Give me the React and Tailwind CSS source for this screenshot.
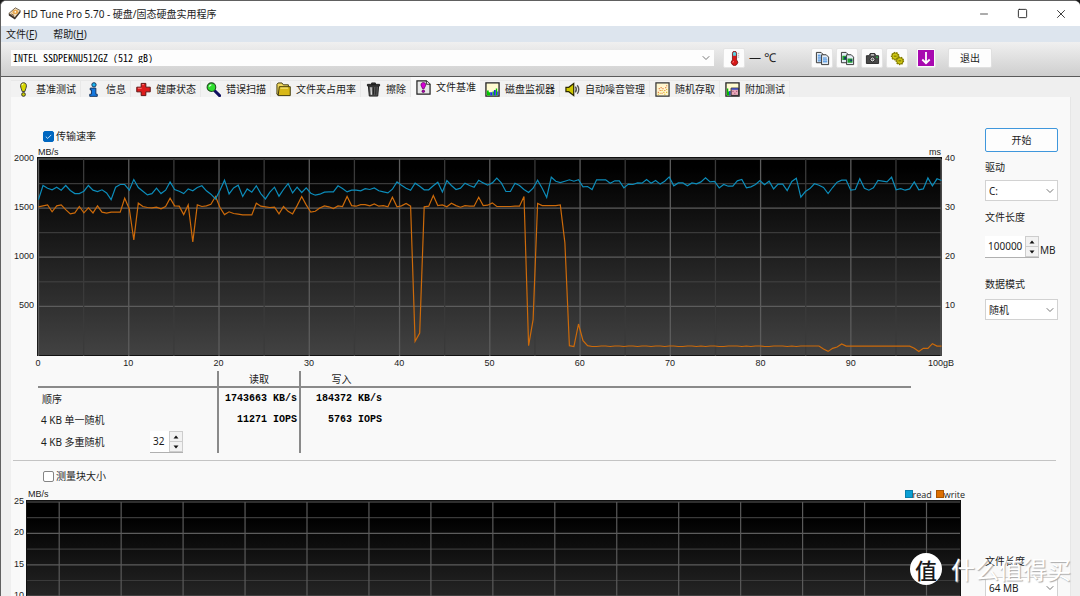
import React from 'react'
import clsx from 'clsx'
import { ChevronDown, Minus, Square, X } from 'lucide-react'

// transfer rate in MB/s, evenly spaced over the test file
const READ = [
  1582, 1725, 1698, 1681, 1708, 1677, 1725, 1674, 1643, 1643, 1667, 1725, 1677, 1664, 1681, 1650, 1582, 1708, 1735, 1735,
  1677, 1786, 1705, 1667, 1630, 1643, 1698, 1643, 1677, 1762, 1684, 1667, 1643, 1691, 1671, 1705, 1722, 1671, 1637, 1589,
  1677, 1779, 1640, 1701, 1728, 1613, 1691, 1657, 1722, 1643, 1589, 1657, 1708, 1616, 1684, 1745, 1650, 1708, 1654, 1701,
  1647, 1626, 1637, 1657, 1660, 1660, 1722, 1694, 1660, 1677, 1677, 1671, 1694, 1684, 1701, 1671, 1660, 1650, 1688, 1762,
  1728, 1698, 1677, 1749, 1718, 1681, 1681, 1722, 1759, 1660, 1776, 1725, 1684, 1698, 1749, 1725, 1708, 1779, 1752, 1728,
  1752, 1800, 1752, 1664, 1664, 1749, 1725, 1684, 1654, 1698, 1779, 1698, 1603, 1810, 1769, 1755, 1769, 1783, 1769, 1783,
  1711, 1715, 1684, 1783, 1783, 1783, 1749, 1773, 1773, 1701, 1739, 1735, 1752, 1749, 1786, 1749, 1776, 1739, 1769, 1813,
  1722, 1752, 1752, 1722, 1752, 1742, 1762, 1803, 1762, 1766, 1701, 1735, 1718, 1718, 1773, 1786, 1701, 1711, 1735, 1776,
  1732, 1769, 1691, 1739, 1739, 1674, 1766, 1800, 1606, 1664, 1694, 1742, 1728, 1705, 1643, 1705, 1759, 1779, 1779, 1677,
  1684, 1793, 1698, 1677, 1701, 1776, 1769, 1762, 1810, 1681, 1694, 1677, 1691, 1762, 1681, 1691, 1803, 1722, 1793, 1776,
]

const WRITE = [
  1508, 1518, 1528, 1457, 1518, 1528, 1480, 1436, 1446, 1511, 1446, 1497, 1446, 1518, 1453, 1443, 1453, 1453, 1453, 1596,
  1487, 1171, 1545, 1511, 1501, 1497, 1504, 1487, 1511, 1596, 1518, 1514, 1429, 1528, 1151, 1528, 1511, 1518, 1535, 1613,
  1501, 1429, 1457, 1440, 1433, 1426, 1426, 1426, 1545, 1514, 1508, 1501, 1504, 1436, 1511, 1463, 1436, 1521, 1613, 1528,
  1453, 1463, 1497, 1518, 1508, 1491, 1518, 1511, 1613, 1521, 1514, 1531, 1531, 1518, 1538, 1514, 1521, 1508, 1606, 1508,
  1518, 1542, 1514, 139, 224, 1508, 1514, 1623, 1521, 1528, 1508, 1545, 1521, 1504, 1521, 1514, 1514, 1606, 1521, 1525,
  1548, 1511, 1511, 1511, 1511, 1514, 1514, 1613, 95, 360, 1542, 1521, 1521, 1521, 1521, 1528, 1141, 95, 85, 316,
  146, 95, 87, 87, 92, 92, 87, 92, 92, 87, 92, 92, 87, 92, 92, 87, 92, 92, 87, 92,
  92, 87, 87, 92, 92, 87, 92, 87, 92, 92, 87, 87, 92, 92, 92, 87, 92, 87, 92, 92,
  87, 87, 92, 92, 92, 87, 92, 87, 92, 92, 92, 92, 92, 61, 37, 68, 81, 112, 91, 91,
  91, 91, 91, 91, 91, 91, 91, 91, 91, 91, 91, 91, 91, 68, 37, 68, 68, 115, 91, 91,
]

const TABS = [
  { label: '基准测试', icon: BenchmarkIcon },
  { label: '信息', icon: InfoIcon },
  { label: '健康状态', icon: HealthIcon },
  { label: '错误扫描', icon: ScanIcon },
  { label: '文件夹占用率', icon: FolderIcon },
  { label: '擦除', icon: EraseIcon },
  { label: '文件基准', icon: FileBenchmarkIcon, active: true },
  { label: '磁盘监视器', icon: MonitorIcon },
  { label: '自动噪音管理', icon: NoiseIcon },
  { label: '随机存取', icon: RandomIcon },
  { label: '附加测试', icon: ExtraIcon },
]

function Icon({ children, className }) {
  return (
    <svg viewBox="0 0 16 16" className={clsx('size-[15px] shrink-0', className)} aria-hidden="true">
      {children}
    </svg>
  )
}

function BenchmarkIcon() {
  return (
    <Icon>
      <path d="M8 .8c2 0 3.1 1.3 3.1 3.2 0 2.2-1.1 3.7-1.7 6.200H6.600C6 7.700 4.900 6.200 4.900 4 4.900 2.100 6 .8 8 .8z" fill="#d8d800" stroke="#333" />
      <path d="M6.500 3.500c0-.9.6-1.400 1.300-1.400" stroke="#fff" fill="none" />
      <circle cx="8" cy="13.3" r="2" fill="#c8c800" stroke="#333" />
    </Icon>
  )
}

function InfoIcon() {
  return (
    <Icon>
      <circle cx="8.5" cy="3" r="2.3" fill="#1ab4f0" stroke="#12305a" />
      <path d="M4.500 6.500h6v6.500h1.500v2.300H4V13h1.800V8.500H4.500z" fill="#1478e0" stroke="#12305a" />
    </Icon>
  )
}

function HealthIcon() {
  return (
    <Icon>
      <path d="M5.500 1.500h5v4h4.700v5h-4.700v4h-5v-4H.8v-5h4.700z" fill="#dd1c1c" stroke="#5a1010" />
      <path d="M6.500 2.800h2M2 6.700h4" stroke="#ff8080" />
    </Icon>
  )
}

function ScanIcon() {
  return (
    <Icon>
      <path d="M9 9l5.500 5.500" stroke="#101060" strokeWidth="3.2" strokeLinecap="round" />
      <circle cx="5.8" cy="5.5" r="4.6" fill="#2ee02e" stroke="#245024" strokeWidth="1.2" />
      <path d="M3.500 5c.3-1.200 1-1.900 2.200-2" stroke="#dfffdf" strokeWidth="1.3" fill="none" />
    </Icon>
  )
}

function FolderIcon() {
  return (
    <Icon>
      <path d="M1 13V2.500L2.300 1h4l1.500 2h5.400v2" fill="#f0d860" stroke="#3b3306" />
      <path d="M3.500 5h11.700v9.500H2.300z" fill="#d8b818" stroke="#3b3306" />
      <path d="M1 12.500l1.300 2" stroke="#3b3306" />
      <path d="M4.700 6.500h8" stroke="#fff29a" />
    </Icon>
  )
}

function EraseIcon() {
  return (
    <Icon>
      <path d="M2.500 4h11l-1 11h-9z" fill="#555" stroke="#1c1c1c" />
      <path d="M1.500 2.500h13v1.700h-13zM6 1h4v1.500H6z" fill="#444" stroke="#1c1c1c" />
      <path d="M5.300 5.500l.4 8" stroke="#eee" strokeWidth="1.3" />
      <path d="M8 5.500v8M10.700 5.500l-.4 8" stroke="#222" />
    </Icon>
  )
}

function FileBenchmarkIcon() {
  return (
    <Icon>
      <path d="M1 1h10l4 3.500V15H1z" fill="#e8e8e8" stroke="#222" strokeWidth="1.3" />
      <path d="M11 1v3.500h4" fill="#fff" stroke="#222" />
      <path d="M7.800 2.700c1.700 0 2.500 1 2.500 2.500S9.200 7.500 8.700 9.300H6.900c-.5-1.800-1.600-2.600-1.600-4.100s.8-2.500 2.500-2.500z" fill="#d400d4" stroke="#500050" strokeWidth=".7" />
      <circle cx="7.8" cy="12" r="1.4" fill="#b000b0" stroke="#500050" strokeWidth=".7" />
    </Icon>
  )
}

function MonitorIcon() {
  return (
    <Icon>
      <path d="M1 1h14v14H1z" fill="#fffbd0" stroke="#222" strokeWidth="1.4" />
      <path d="M2 14.300V9h2v2h1.500v3.300zM8 14.300V10h1.500v4.300zM11.500 14.300V7H13v7.300z" fill="#00c800" />
      <path d="M5.500 14.300V11H8v3.300zM9.500 14.300V8.500h2v5.800zM13 14.300V10h1.200v4.300z" fill="#2030e0" />
    </Icon>
  )
}

function NoiseIcon() {
  return (
    <Icon>
      <path d="M1 5.700h3L9.300 1.500v13L4 10.300H1z" fill="#d0c800" stroke="#2d2a00" strokeWidth="1.3" />
      <path d="M11 5c1.300 1.700 1.300 4.300 0 6M13 3.500c2.200 2.500 2.200 6.500 0 9" fill="none" stroke="#555" strokeWidth="1.5" />
    </Icon>
  )
}

function RandomIcon() {
  return (
    <Icon>
      <path d="M1 1h14v14H1z" fill="#fff6cf" stroke="#333" strokeWidth="1.3" />
      <path d="M3 11h1M5 9h1M7 12h1M8 7h1M10 9h1M12 4h1M11 6h1M4 7h1M6 6h1" stroke="#e06020" strokeWidth="1.2" />
      <path d="M3 13h1M5 12h1M9 11h1M12 11h1M10 13h1M7 9h1M12 8h1" stroke="#d8a800" strokeWidth="1.2" />
    </Icon>
  )
}

function ExtraIcon() {
  return (
    <Icon>
      <path d="M1 1h14v14H1z" fill="#fffbd0" stroke="#222" strokeWidth="1.4" />
      <path d="M2 14.300V7h1.500v3H5v4.300z" fill="#00b800" />
      <path d="M4.500 14V9.500H6V14z" fill="#2030e0" />
      <path d="M6.500 6.500h8v7.800h-8z" fill="#e8a8b8" stroke="#222" />
      <path d="M7 7.500h7" stroke="#3048c0" strokeWidth="1.6" />
      <path d="M8 10h1M10 12h1M12 10h1" stroke="#903060" />
    </Icon>
  )
}

function DiskLogo() {
  return (
    <svg viewBox="0 0 16 16" className="size-[13px] shrink-0" aria-hidden="true">
      <path d="M1 8L9 1l6.300 3.500L8.500 13z" fill="#f0dcb8" stroke="#4a3a28" strokeWidth=".9" />
      <path d="M1 8l7.500 5v2.300L1 10.500zM8.500 13l6.800-8.500v2.300l-6.800 8.500z" fill="#3b3028" />
      <ellipse cx="9" cy="6" rx="3.5" ry="2.7" fill="#e8a850" />
      <circle cx="9" cy="6" r="1" fill="#fff" />
      <path d="M4 8.500l3.500 2" stroke="#7a5030" strokeWidth="1.2" />
    </svg>
  )
}

function ThermometerIcon() {
  return (
    <Icon>
      <path d="M5.800 9.500V2.500a2.200 2.200 0 014.400 0v7a3.400 3.400 0 11-4.400 0z" fill="#d81818" stroke="#6a1010" strokeWidth=".8" />
      <path d="M6.500 2.500a1.500 1.500 0 013 0V5h-3z" fill="#50d8e8" />
      <path d="M11.500 2.500H13M11.500 4.500H13M11.500 6.500H13" stroke="#888" strokeWidth=".7" />
      <path d="M6.300 12.300c0-.6.3-1 .8-1.200" stroke="#ffb0b0" fill="none" />
    </Icon>
  )
}

function CopyIcon({ green }) {
  return (
    <Icon>
      <path d="M1.500 1.500h5l2 2v9h-7z" fill="#e4ecf4" stroke="#333" />
      <path d="M7 4h5l2.500 2.500v8H7z" fill="#e4ecf4" stroke="#333" />
      {green ? (
        <>
          <path d="M2.500 5h4v4.500h-4zM8 8h5.300v4.500H8z" fill="#20a030" />
          <path d="M4.500 6.500h2V9h-2zM11 9h2v2h-2z" fill="#183070" />
        </>
      ) : (
        <path d="M3 4.500h3M3 6.500h3.500M3 8.500h3.500M3 10.500h3.500M8.500 7.500h4M8.500 9.500h4.500M8.500 11.500h4.500" stroke="#2a80e0" />
      )}
    </Icon>
  )
}

function CameraIcon() {
  return (
    <Icon>
      <path d="M1.500 5h3l1-2.300h5l1 2.300h3v8.300h-13z" fill="#484848" stroke="#2a2a2a" strokeLinejoin="round" />
      <path d="M6.300 3.500h3.400v1.300H6.300z" fill="#ddd" />
      <circle cx="8" cy="9" r="2.6" fill="#e8e8e8" stroke="#222" />
      <circle cx="8" cy="9" r="1.2" fill="#555" />
      <path d="M12 6.500h1.700" stroke="#20d040" strokeWidth="1.3" />
    </Icon>
  )
}

function OptionsIcon() {
  return (
    <Icon>
      <circle cx="5.500" cy="5.500" r="3.6" fill="#c8c010" stroke="#8a8200" strokeWidth="2" strokeDasharray="1.5 1" />
      <circle cx="5.500" cy="5.500" r="3.4" fill="#d0c810" stroke="#6a6400" strokeWidth=".7" />
      <circle cx="10.500" cy="10.500" r="3.6" fill="#c8c010" stroke="#8a8200" strokeWidth="2" strokeDasharray="1.5 1" />
      <circle cx="10.500" cy="10.500" r="3.4" fill="#d0c810" stroke="#6a6400" strokeWidth=".7" />
      <path d="M4 5.500h3M9 10.500h3" stroke="#6a6400" />
    </Icon>
  )
}

function ToolButton({ label, children }) {
  return (
    <button
      aria-label={label}
      className="flex h-5 w-[22px] items-center justify-center rounded-xs border border-[#e4e4e4] bg-[#fcfcfc]"
    >
      {children}
    </button>
  )
}

function CheckBox({ id, label, defaultChecked }) {
  return (
    <div className="flex h-4 items-center gap-0.5">
      <span className="grid place-items-center">
        <input
          id={id}
          type="checkbox"
          defaultChecked={defaultChecked}
          className="peer size-[11px] appearance-none rounded-xs border border-[#858585] bg-white [grid-area:1/1] checked:border-[#0067c0] checked:bg-[#0067c0]"
        />
        <svg viewBox="0 0 10 10" className="pointer-events-none hidden size-[9px] [grid-area:1/1] peer-checked:block">
          <path d="M2 5.200l2.100 2L8 3.200" fill="none" stroke="#d6ecff" />
        </svg>
      </span>
      <label htmlFor={id}>{label}</label>
    </div>
  )
}

function SelectBox({ id, value, className }) {
  return (
    <div className={clsx('grid items-center', className)}>
      <select
        id={id}
        defaultValue={value}
        className="h-full w-full appearance-none border border-[#d2d2d2] bg-white px-[3px] [grid-area:1/1]"
      >
        <option>{value}</option>
      </select>
      <ChevronDown className="pointer-events-none mr-0.5 size-3 justify-self-end text-[#777] [grid-area:1/1]" />
    </div>
  )
}

function Spinner({ id, label, value, className }) {
  return (
    <div className="flex h-[22px] border-b border-[#b0b0b0]">
      <input id={id} aria-label={label} defaultValue={value} className={clsx('h-full bg-white pb-0.5 pl-[3px]', className)} />
      <div className="flex w-[14px] flex-col gap-px bg-[#cdcdcd] p-px">
        <button aria-label="增加" className="flex flex-1 items-center justify-center bg-[#f2f2f2]">
          <svg viewBox="0 0 6 4" className="h-1 w-1.5"><path d="M.5 3.500L3 .5l2.500 3z" fill="#111" /></svg>
        </button>
        <button aria-label="减少" className="flex flex-1 items-center justify-center bg-[#f2f2f2]">
          <svg viewBox="0 0 6 4" className="h-1 w-1.5"><path d="M.5.5l2.500 3 2.500-3z" fill="#111" /></svg>
        </button>
      </div>
    </div>
  )
}

function AxisY({ ticks, className }) {
  return (
    <div className={clsx('flex flex-col justify-between py-px', className)}>
      {ticks.map((t, i) => (
        <span key={i} className="flex h-0 items-center">{t}</span>
      ))}
    </div>
  )
}

const toPoints = (series) =>
  series.map((v, i) => `${(1.5 + (i * 903) / (series.length - 1)).toFixed(1)},${(198 - (v * 196.5) / 2000).toFixed(1)}`).join(' ')

function TransferChart() {
  const columns = Array.from({ length: 21 }, (_, i) => i)
  const rows = Array.from({ length: 8 }, (_, i) => i)
  return (
    <svg viewBox="0 0 905 199" preserveAspectRatio="none" className="block h-[199px] w-full">
      <defs>
        <linearGradient id="plot" x1="0" y1="0" x2="0" y2="1">
          <stop offset="0.05" stopColor="#000" />
          <stop offset="1" stopColor="#424242" />
        </linearGradient>
      </defs>
      <rect width="905" height="199" fill="#111" />
      <rect x="1" y="1" width="903" height="197" fill="url(#plot)" />
      {rows.map((i) => (
        <line key={i} x1="1" x2="904" y1={2 + i * 24.55} y2={2 + i * 24.55} stroke={i % 2 ? '#3a3a3a' : '#5c5c5c'} strokeWidth="1.3" />
      ))}
      {columns.map((i) => (
        <line key={i} y1="2" y2="199" x1={1.5 + i * 45.13} x2={1.5 + i * 45.13} stroke={i % 2 ? '#3a3a3a' : '#5c5c5c'} strokeWidth="1.3" />
      ))}
      <polyline points={toPoints(WRITE)} fill="none" stroke="#cc6a0a" strokeWidth="1.2" />
      <polyline points={toPoints(READ)} fill="none" stroke="#0c8cba" strokeWidth="1.2" />
    </svg>
  )
}

function BlockSizeChart() {
  return (
    <svg viewBox="0 0 935 160" preserveAspectRatio="none" className="block h-[160px] w-full">
      <defs>
        <linearGradient id="blocks" x1="0" y1="0" x2="0" y2="1">
          <stop offset="0.1" stopColor="#000" />
          <stop offset="1" stopColor="#424242" />
        </linearGradient>
      </defs>
      <rect width="935" height="160" fill="#111" />
      <rect x="1" y="1" width="933" height="158" fill="url(#blocks)" />
      {Array.from({ length: 10 }, (_, i) => (
        <line key={i} x1="1" x2="934" y1={2 + i * 15.7} y2={2 + i * 15.7} stroke={i % 2 ? '#3a3a3a' : '#5c5c5c'} strokeWidth="1.2" />
      ))}
      {Array.from({ length: 15 }, (_, i) => (
        <line key={i} y1="2" y2="159" x1={33.2 + i * 61.95} x2={33.2 + i * 61.95} stroke="#5a5a5a" strokeWidth="1.2" />
      ))}
    </svg>
  )
}

function TitleBar() {
  return (
    <header className="flex h-[25px] items-center bg-white pl-[7px]">
      <DiskLogo />
      <h1 className="ml-0.5 flex-1">HD Tune Pro 5.70 - 硬盘/固态硬盘实用程序</h1>
      <div className="flex items-center text-[#222]">
        <button aria-label="最小化" className="flex w-[39px] justify-center"><Minus className="size-3" strokeWidth={1.5} /></button>
        <button aria-label="最大化" className="flex w-[39px] justify-center"><Square className="size-[11px]" strokeWidth={2} /></button>
        <button aria-label="关闭" className="flex w-[38px] justify-center"><X className="size-[14px]" strokeWidth={1.5} /></button>
      </div>
    </header>
  )
}

function Toolbar() {
  return (
    <div className="flex h-[35px] items-center border-b border-[#5a5a5a] bg-linear-to-b from-[#f0f0f0] to-[#cecece] pr-[88px] pb-0.5 pl-[10px]">
      <div className="grid h-4 flex-1 items-center">
        <select
          aria-label="硬盘"
          className="h-full w-full appearance-none bg-[#fdfdfd] px-0.5 font-['Noto_Sans_CJK_SC',monospace] text-black [font-feature-settings:'hwid'] [grid-area:1/1]"
        >
          <option>INTEL SSDPEKNU512GZ (512 gB)</option>
        </select>
        <ChevronDown className="pointer-events-none mr-0.5 size-3 justify-self-end text-[#777] [grid-area:1/1]" />
      </div>
      <div className="ml-[9px] flex w-[88px] items-center gap-1">
        <ToolButton label="温度"><ThermometerIcon /></ToolButton>
        <span className="text-xs">— ℃</span>
      </div>
      <div className="flex gap-[3px]">
        <ToolButton label="复制信息"><CopyIcon /></ToolButton>
        <ToolButton label="复制截图"><CopyIcon green /></ToolButton>
        <ToolButton label="保存截图"><CameraIcon /></ToolButton>
        <ToolButton label="选项"><OptionsIcon /></ToolButton>
      </div>
      <button aria-label="最小化到托盘" className="ml-2 flex size-5 items-center justify-center rounded-xs border border-[#e4e4e4] bg-[#fcfcfc]">
        <svg viewBox="0 0 16 16" className="size-4">
          <path d="M0 0h16v16H0z" fill="#a808b0" />
          <path d="M8 2v11M4.300 9.500L8 13.200l3.700-3.700" stroke="#fff" strokeWidth="1.8" fill="none" />
        </svg>
      </button>
      <button className="ml-3 h-5 w-11 rounded-xs border border-[#e0e0e0] bg-[#fdfdfd]">退出</button>
    </div>
  )
}

function Tabs() {
  return (
    <nav className="flex h-5 items-end bg-[#efefef] pl-[10px]">
      {TABS.map(({ label, icon: TabIcon, active }) => (
        <button
          key={label}
          className={clsx(
            'flex items-center gap-[5px] pr-1 pl-[5px]',
            active ? 'h-full bg-[#f9f9f9]' : 'h-[17px] border-t border-r border-[#e8e8e8] bg-[#f2f2f2]'
          )}
        >
          <TabIcon />
          {label}
        </button>
      ))}
    </nav>
  )
}

function Value({ children, className }) {
  return (
    <td className={clsx("text-right font-['Liberation_Mono',monospace] font-bold whitespace-nowrap text-black", className)}>
      {children}
    </td>
  )
}

function Results() {
  return (
    <table className="w-full table-fixed border-collapse text-left">
      <colgroup>
        <col className="w-[180px]" />
        <col className="w-[82px]" />
        <col className="w-[82px]" />
        <col />
      </colgroup>
      <thead>
        <tr className="h-4 border-b-2 border-[#8a8a8a]">
          <th className="border-r-2 border-[#8a8a8a]" />
          <th className="border-r-2 border-[#8a8a8a] text-center font-normal">读取</th>
          <th className="text-center font-normal">写入</th>
          <th />
        </tr>
      </thead>
      <tbody>
        <tr className="h-[22px]">
          <th className="border-r-2 border-[#8a8a8a] pl-1 font-normal">顺序</th>
          <Value className="border-r-2 border-[#8a8a8a] pr-0.5">1743663 KB/s</Value>
          <Value>184372 KB/s</Value>
          <td />
        </tr>
        <tr className="h-[22px]">
          <th className="border-r-2 border-[#8a8a8a] pl-[3px] font-normal">4 KB 单一随机</th>
          <Value className="border-r-2 border-[#8a8a8a] pr-0.5">11271 IOPS</Value>
          <Value>5763 IOPS</Value>
          <td />
        </tr>
        <tr className="h-[22px]">
          <th className="border-r-2 border-[#8a8a8a] pl-[3px] font-normal">
            <div className="flex items-center justify-between pr-[34px]">
              <label htmlFor="queue">4 KB 多重随机</label>
              <Spinner id="queue" value="32" className="w-[19px]" />
            </div>
          </th>
          <td className="border-r-2 border-[#8a8a8a]" />
          <td />
          <td />
        </tr>
      </tbody>
    </table>
  )
}

export default function App() {
  return (
    <div className="h-screen overflow-hidden bg-[#1a1a1a] font-['Noto_Sans','Noto_Sans_CJK_SC',sans-serif] text-[10px] leading-none text-[#1c1c1c]">
      <div className="flex h-full flex-col overflow-hidden rounded-t-md border-t border-l border-[#606060] bg-[#efefef]">
        <TitleBar />
        <nav className="flex h-4 items-center gap-4 bg-[#dde5ee] pl-[5px]">
          <button>文件(<u>F</u>)</button>
          <button>帮助(<u>H</u>)</button>
        </nav>
        <Toolbar />
        <Tabs />

        <main className="mr-[9px] ml-[10px] min-h-0 flex-1 overflow-hidden border-r border-[#e6e6e6] bg-[#f9f9f9]">
          <section className="flex">
            <div className="min-w-0 flex-1 pt-[31px]">
              <div className="pl-8">
                <CheckBox id="rate" label="传输速率" defaultChecked />
              </div>
              <div className="mt-1 grid grid-cols-[26px_1fr_43px] font-['Liberation_Sans',sans-serif] text-[9px]">
                <div className="col-start-2 flex h-[9px] items-center justify-between px-px">
                  <span>MB/s</span>
                  <span>ms</span>
                </div>
                <AxisY ticks={['2000', '1500', '1000', '500', '']} className="col-start-1 items-end pr-[3px]" />
                <TransferChart />
                <AxisY ticks={['40', '30', '20', '10', '']} className="pl-[3px]" />
                <div className="col-start-2 flex h-[15px] items-center justify-between px-px">
                  {['0', '10', '20', '30', '40', '50', '60', '70', '80', '90', '100gB'].map((t) => (
                    <span key={t} className="flex w-0 justify-center whitespace-nowrap">{t}</span>
                  ))}
                </div>
              </div>
              <div className="pr-[74px] pl-[27px]">
                <Results />
              </div>
            </div>

            <aside className="flex w-[85px] flex-col pt-[31px] pr-3">
              <button className="h-6 rounded-xs border border-[#3f97dc] bg-[#fdfdfd]">开始</button>
              <label htmlFor="drive" className="mt-[10px]">驱动</label>
              <SelectBox id="drive" value="C:" className="mt-2 h-[21px]" />
              <label htmlFor="length" className="mt-[11px]">文件长度</label>
              <div className="mt-[14px] flex items-end gap-px">
                <Spinner id="length" value="100000" className="w-10" />
                <span className="pb-[3px]">MB</span>
              </div>
              <label htmlFor="mode" className="mt-[21px]">数据模式</label>
              <SelectBox id="mode" value="随机" className="mt-[10px] h-[21px]" />
            </aside>
          </section>

          <hr className="mt-[7px] mr-[14px] ml-0.5 border-[#c4c4c4]" />

          <section className="flex">
            <div className="min-w-0 flex-1 pt-[7px]">
              <div className="pl-8">
                <CheckBox id="block" label="测量块大小" />
              </div>
              <div className="mt-1 grid grid-cols-[15px_1fr_24px] font-['Liberation_Sans',sans-serif] text-[9px]">
                <div className="col-start-2 flex h-3 items-center justify-between pl-0.5">
                  <span>MB/s</span>
                  <div className="-mr-1 flex gap-1 font-['Open_Sans',sans-serif]">
                    <span className="flex items-center"><i className="size-2 border border-[#0a7eaa] bg-[#0a9fd4]" />read</span>
                    <span className="flex items-center"><i className="size-2 border border-[#a85400] bg-[#dd6f00]" />write</span>
                  </div>
                </div>
                <AxisY ticks={['25', '20', '15', '10', '5', '']} className="col-start-1 items-end pr-0.5" />
                <BlockSizeChart />
              </div>
            </div>

            <aside className="flex w-[85px] flex-col pt-[95px] pr-3">
              <label htmlFor="block-length">文件长度</label>
              <SelectBox id="block-length" value="64 MB" className="mt-[11px] h-[21px]" />
            </aside>
          </section>
        </main>
      </div>

      {/* site stamp over the lower right corner */}
      <div className="pointer-events-none absolute right-[9px] bottom-[11px] flex items-center gap-[9px] font-['Noto_Sans_CJK_SC',sans-serif] text-white">
        <span className="flex size-8 items-center justify-center rounded-full bg-white text-[22px] font-medium text-[#1a1a1a]">值</span>
        <span className="text-[24px] [text-shadow:1px_1px_1px_#aaa]">什么值得买</span>
      </div>
    </div>
  )
}
